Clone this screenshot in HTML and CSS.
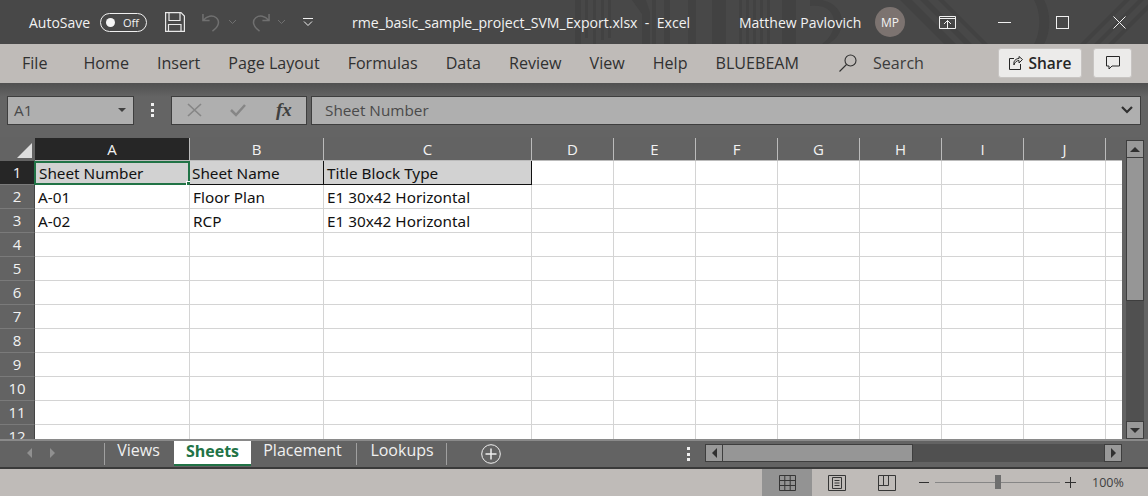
FILE: index.html
```html
<!DOCTYPE html>
<html lang="en">
<head>
    <meta charset="UTF-8">
    <title>rme_basic_sample_project_SVM_Export.xlsx - Excel</title>
    <link rel="stylesheet" href="styles.css">
</head>
<body>
<div class="app">
    <div class="titlebar">
        <svg class="title-art" width="588" height="44" viewBox="0 0 588 44" fill="#424242">
            <path d="M15 0h6v44h-6zM25 0h3v38h-3zM33 0h3v44h-3zM41 0h3v40h-3zM48 0h3v38h-3zM72 0h14l4 12V44H82V14zM92 0h4v44h-4zM104 0h6v44h-6zM128 0h8v44h-8zM152 0h14v44h-14zM179 0h3v44h-3zM186 0h3v44h-3zM193 0h3v44h-3zM200 0h3v44h-3zM207 0h3v44h-3zM222 0h14v44h-14zM250 0h12c14 3 20 12 20 22c0 10-6 18-14 22h-6c8-6 12-13 12-22c0-10-8-18-24-16z"/>
            <path d="M340 0h12l44 44h-12zM360 0h8l44 44h-8zM378 0h6l44 44h-6z"/>
            <path d="M474 0h10c7 12 7 32 0 44h-10c7-12 7-32 0-44z"/>
            <path d="M520 44l44-44h6l-44 44zM534 44l44-44h6l-44 44zM548 44l40-40v6l-34 34z"/>
        </svg>
        <span class="autosave">AutoSave</span>
        <span class="toggle"><i class="knob"></i><span class="toggle-text">Off</span></span>
        <svg class="ico-save" width="20" height="20" viewBox="0 0 20 20" fill="none" stroke="#e8e8e8" stroke-width="1.2"><path d="M.6.6H16L19.4 4V19.4H.6zM4 .6V8.5H15V.6M3.5 19.4V12.5H16V19.4"/></svg>
        <svg class="ico-undo" width="19" height="19" viewBox="0 0 20 20" fill="none" stroke="#707070" stroke-width="1.6"><path d="M1 1V8H8M1.5 7.5C5 3 11 2 15 5C19 8.500 18 14 11 19"/></svg>
        <svg class="ico-chev" width="7" height="4" viewBox="0 0 7 4" fill="none" stroke="#707070"><path d="M0 0L3.500 3.500L7 0"/></svg>
        <svg class="ico-redo" width="19" height="19" viewBox="0 0 20 20" fill="none" stroke="#707070" stroke-width="1.6"><path d="M19 1V8H12M18.500 7.500C15 3 9 2 5 5C1 8.500 2 14 9 19"/></svg>
        <svg class="ico-chev" width="7" height="4" viewBox="0 0 7 4" fill="none" stroke="#707070"><path d="M0 0L3.500 3.500L7 0"/></svg>
        <svg class="ico-qat" width="10" height="8" viewBox="0 0 10 8" fill="none" stroke="#f0f0f0"><path d="M0 .5H10M1 3.500L5 7.500L9 3.500"/></svg>
        <span class="doc-title">rme_basic_sample_project_SVM_Export.xlsx&nbsp; -&nbsp; Excel</span>
        <span class="user">Matthew Pavlovich</span>
        <span class="avatar">MP</span>
        <svg class="ico-display" width="17" height="13" viewBox="0 0 17 13" fill="none" stroke="#f0f0f0"><path d="M.5.5H16.500V12.500H.5zM.5 2.500H16.500M5 8L8.500 4.500L12 8M8.500 4.500V12"/></svg>
        <svg class="ico-min" width="13" height="1" viewBox="0 0 13 1"><rect width="13" height="1" fill="#f0f0f0"/></svg>
        <svg class="ico-max" width="13" height="13" viewBox="0 0 13 13" fill="none" stroke="#f0f0f0"><rect x=".5" y=".5" width="12" height="12"/></svg>
        <svg class="ico-close" width="13" height="13" viewBox="0 0 13 13" fill="none" stroke="#f0f0f0"><path d="M.5.5L12.500 12.500M12.500.5L.5 12.500"/></svg>
    </div>

    <div class="ribbon">
        <span class="rtab first">File</span>
        <span class="rtab">Home</span>
        <span class="rtab">Insert</span>
        <span class="rtab">Page Layout</span>
        <span class="rtab">Formulas</span>
        <span class="rtab">Data</span>
        <span class="rtab">Review</span>
        <span class="rtab">View</span>
        <span class="rtab">Help</span>
        <span class="rtab">BLUEBEAM</span>
        <svg class="ico-search" width="18" height="18" viewBox="0 0 18 18" fill="none" stroke="#303030" stroke-width="1.100"><circle cx="11.500" cy="6.500" r="5.500"/><path d="M7.500 10.500L.5 17.500"/></svg>
        <span class="search-text">Search</span>
        <button class="share">
            <svg width="14" height="14" viewBox="0 0 14 14" fill="none" stroke="#262626"><path d="M5 2.500H.5V13.500H11.500V8M5 9C5.500 6 8 4.500 10 4.500V7L13.500 3.500L10 .5V2.500C7 2.500 4 5 5 9z"/></svg>
            Share
        </button>
        <button class="comment">
            <svg width="14" height="14" viewBox="0 0 14 14" fill="none" stroke="#262626"><path d="M.5.5H13.500V10H6L3 13V10H.5z"/></svg>
        </button>
    </div>

    <div class="formulabar">
        <div class="namebox"><span>A1</span><i class="caret"></i></div>
        <div class="vdots"><i></i><i></i><i></i></div>
        <div class="fx-btns">
            <svg width="15" height="14" viewBox="0 0 15 14" fill="none" stroke="#868686" stroke-width="1.700"><path d="M1 1L14 13M14 1L1 13"/></svg>
            <svg width="16" height="14" viewBox="0 0 16 14" fill="none" stroke="#868686" stroke-width="2.500"><path d="M1 7L6 12L15 2"/></svg>
            <span class="fx">fx</span>
        </div>
        <div class="formula-input">
            <span>Sheet Number</span>
            <svg width="12" height="8" viewBox="0 0 12 8" fill="none" stroke="#303030" stroke-width="2.200"><path d="M1 1L6 6L11 1"/></svg>
        </div>
    </div>

    <div class="sheet-area">
        <div class="sheet-main">
            <div class="grid">
                <div class="corner"><i></i></div>
                <div class="ch active">A</div>
                <div class="ch">B</div>
                <div class="ch">C</div>
                <div class="ch">D</div>
                <div class="ch">E</div>
                <div class="ch">F</div>
                <div class="ch">G</div>
                <div class="ch">H</div>
                <div class="ch">I</div>
                <div class="ch">J</div>
                <div class="ch"></div>

                <div class="rh active">1</div>
                <div class="c head sel">Sheet Number<i class="handle"></i></div>
                <div class="c head">Sheet Name</div>
                <div class="c head">Title Block Type</div>
                <div class="c"></div><div class="c"></div><div class="c"></div><div class="c"></div><div class="c"></div><div class="c"></div><div class="c"></div><div class="c"></div>

                <div class="rh">2</div>
                <div class="c">A-01</div>
                <div class="c">Floor Plan</div>
                <div class="c">E1 30x42 Horizontal</div>
                <div class="c"></div><div class="c"></div><div class="c"></div><div class="c"></div><div class="c"></div><div class="c"></div><div class="c"></div><div class="c"></div>

                <div class="rh">3</div>
                <div class="c">A-02</div>
                <div class="c">RCP</div>
                <div class="c">E1 30x42 Horizontal</div>
                <div class="c"></div><div class="c"></div><div class="c"></div><div class="c"></div><div class="c"></div><div class="c"></div><div class="c"></div><div class="c"></div>

                <div class="rh">4</div><div class="c"></div><div class="c"></div><div class="c"></div><div class="c"></div><div class="c"></div><div class="c"></div><div class="c"></div><div class="c"></div><div class="c"></div><div class="c"></div><div class="c"></div>
                <div class="rh">5</div><div class="c"></div><div class="c"></div><div class="c"></div><div class="c"></div><div class="c"></div><div class="c"></div><div class="c"></div><div class="c"></div><div class="c"></div><div class="c"></div><div class="c"></div>
                <div class="rh">6</div><div class="c"></div><div class="c"></div><div class="c"></div><div class="c"></div><div class="c"></div><div class="c"></div><div class="c"></div><div class="c"></div><div class="c"></div><div class="c"></div><div class="c"></div>
                <div class="rh">7</div><div class="c"></div><div class="c"></div><div class="c"></div><div class="c"></div><div class="c"></div><div class="c"></div><div class="c"></div><div class="c"></div><div class="c"></div><div class="c"></div><div class="c"></div>
                <div class="rh">8</div><div class="c"></div><div class="c"></div><div class="c"></div><div class="c"></div><div class="c"></div><div class="c"></div><div class="c"></div><div class="c"></div><div class="c"></div><div class="c"></div><div class="c"></div>
                <div class="rh">9</div><div class="c"></div><div class="c"></div><div class="c"></div><div class="c"></div><div class="c"></div><div class="c"></div><div class="c"></div><div class="c"></div><div class="c"></div><div class="c"></div><div class="c"></div>
                <div class="rh">10</div><div class="c"></div><div class="c"></div><div class="c"></div><div class="c"></div><div class="c"></div><div class="c"></div><div class="c"></div><div class="c"></div><div class="c"></div><div class="c"></div><div class="c"></div>
                <div class="rh">11</div><div class="c"></div><div class="c"></div><div class="c"></div><div class="c"></div><div class="c"></div><div class="c"></div><div class="c"></div><div class="c"></div><div class="c"></div><div class="c"></div><div class="c"></div>
                <div class="rh">12</div><div class="c"></div><div class="c"></div><div class="c"></div><div class="c"></div><div class="c"></div><div class="c"></div><div class="c"></div><div class="c"></div><div class="c"></div><div class="c"></div><div class="c"></div>
            </div>
        </div>
        <div class="vscroll">
            <div class="sb-btn"><i class="tri up"></i></div>
            <div class="vthumb"></div>
            <div class="vtrack"></div>
            <div class="sb-btn"><i class="tri down"></i></div>
        </div>
    </div>

    <div class="tabbar">
        <div class="tab-nav"><i class="tri left dim"></i><i class="tri right dim"></i></div>
        <div class="sheet-tab views">Views</div>
        <div class="sheet-tab on">Sheets</div>
        <div class="sheet-tab placement">Placement</div>
        <div class="sheet-tab lookups">Lookups</div>
        <svg class="ico-plus" width="20" height="20" viewBox="0 0 20 20" fill="none" stroke="#f0f0f0"><circle cx="10" cy="10" r="9.300"/><path d="M10 4.500V15.500M4.500 10H15.500" stroke-width="1.500"/></svg>
        <div class="vdots tabdots"><i></i><i></i><i></i></div>
        <div class="hscroll">
            <div class="sb-btn"><i class="tri left"></i></div>
            <div class="hthumb"></div>
            <div class="htrack"></div>
            <div class="sb-btn"><i class="tri right"></i></div>
        </div>
    </div>

    <div class="statusbar">
        <div class="view-btn on">
            <svg width="17" height="16" viewBox="0 0 17 16" fill="none" stroke="#363636"><path d="M.5.5H16.500V15.500H.5zM.5 5.500H16.500M.5 10.500H16.500M5.800.5V15.500M11.200.5V15.500"/></svg>
        </div>
        <div class="view-btn">
            <svg width="18" height="16" viewBox="0 0 18 16" fill="none" stroke="#363636"><path d="M.5.5H17.500V15.500H.5zM4.500 2.500H13.500V13.500H4.500zM6.500 5.500H11.500M6.500 8H11.500M6.500 10.500H11.500"/></svg>
        </div>
        <div class="view-btn">
            <svg width="18" height="16" viewBox="0 0 18 16" fill="none" stroke="#363636"><path d="M.5.5H17.500V15.500H.5zM.5 10.500H10.500V.5M5.500.5V10.500"/></svg>
        </div>
        <span class="zoom-sign minus"></span>
        <div class="slider"><i></i></div>
        <span class="zoom-sign plus"></span>
        <span class="zoom-pct">100%</span>
    </div>
</div>
</body>
</html>
```

FILE: styles.css
```css
* {
    margin: 0;
    padding: 0;
    box-sizing: border-box;
}

body {
    width: 1148px;
    height: 496px;
    overflow: hidden;
    font-family: "Open Sans", "Noto Sans", sans-serif;
    background: #636363;
}

.app {
    display: flex;
    flex-direction: column;
    height: 496px;
}

/* title bar */
.titlebar {
    height: 44px;
    background: #484848;
    color: #f2f2f2;
    display: flex;
    align-items: center;
    font-size: 14px;
    padding-left: 29px;
    flex-shrink: 0;
    position: relative;
}

.titlebar > * {
    position: relative;
}

.titlebar > .title-art {
    position: absolute;
    left: 560px;
    top: 0;
}

.autosave {
    width: 71px;
}

.toggle {
    width: 47px;
    height: 19px;
    border: 1px solid #f0f0f0;
    border-radius: 10px;
    display: flex;
    align-items: center;
    padding-left: 5px;
    font-size: 11px;
}

.knob {
    width: 9px;
    height: 9px;
    border-radius: 50%;
    background: #f5f5f5;
    margin-right: 8px;
}

.ico-save { margin-left: 18px; }
.ico-undo { margin-left: 17px; }
.ico-chev { margin-left: 8px; }
.ico-redo { margin-left: 15px; }
.ico-qat { margin-left: 18px; }

.doc-title {
    margin-left: 39px;
    width: 387px;
    font-size: 14.100px;
    white-space: nowrap;
}

.user {
    width: 136px;
    white-space: nowrap;
}

.avatar {
    width: 30px;
    height: 30px;
    border-radius: 50%;
    background: #7c7370;
    font-size: 12px;
    display: flex;
    align-items: center;
    justify-content: center;
}

.ico-display { margin-left: 34px; }
.ico-min { margin-left: 42px; }
.ico-max { margin-left: 45px; }
.ico-close { margin-left: 44px; }

/* ribbon tabs */
.ribbon {
    height: 39px;
    background: #bfbbb8;
    color: #303030;
    display: flex;
    align-items: center;
    font-size: 16.100px;
    padding: 0 16px 1px 22px;
    gap: 28px;
    flex-shrink: 0;
}

.rtab.first {
    margin-right: 8px;
}

.ico-search {
    margin-left: 12px;
}

.search-text {
    margin-left: -12px;
    color: #3c3c3c;
}

.share {
    width: 84px;
    height: 30px;
    margin-left: auto;
    background: #ecebea;
    border: 1px solid #c8c5c3;
    border-radius: 3px;
    font: 600 15.500px "Open Sans", sans-serif;
    color: #262626;
    display: flex;
    align-items: center;
    justify-content: center;
    gap: 6px;
}

.comment {
    width: 39px;
    height: 30px;
    background: #ecebea;
    border: 1px solid #c8c5c3;
    border-radius: 3px;
    margin-left: -17px;
    display: flex;
    align-items: center;
    justify-content: center;
}

/* formula bar */
.formulabar {
    height: 54px;
    background: linear-gradient(#505050, #646464 14px);
    display: flex;
    align-items: center;
    padding: 0 7px;
    flex-shrink: 0;
}

.namebox,
.fx-btns,
.formula-input {
    height: 29px;
    background: #afafaf;
    border: 1px solid #3e3e3e;
    color: #4a4a4a;
    font-size: 15.300px;
    display: flex;
    align-items: center;
}

.namebox {
    width: 127px;
    padding: 0 7px 0 6px;
    justify-content: space-between;
}

.caret {
    border: 4px solid transparent;
    border-top-color: #404040;
    border-bottom: 0;
}

.vdots {
    width: 3px;
    height: 14px;
    display: flex;
    flex-direction: column;
    justify-content: space-between;
    margin: 0 17px;
}

.vdots i {
    height: 3px;
    background: #f0f0f0;
}

.fx-btns {
    width: 136px;
    margin-right: 4px;
    padding-left: 15px;
    gap: 28px;
}

.fx {
    font: italic bold 19px "Liberation Serif", serif;
    color: #404040;
    margin-left: 2px;
}

.formula-input {
    flex: 1;
    padding: 0 7px 0 13px;
    justify-content: space-between;
}

/* sheet */
.sheet-area {
    height: 302px;
    flex-shrink: 0;
    display: flex;
    overflow: hidden;
}

.sheet-main {
    width: 1122px;
    overflow: hidden;
}

.grid {
    display: grid;
    grid-template-columns: 35px 155px 134px 208px 82px 82px 82px 82px 82px 82px 82px 17px;
    grid-auto-rows: 24px;
    grid-template-rows: 24px;
}

.corner {
    background: #636363;
    display: flex;
    align-items: flex-end;
    justify-content: flex-end;
    padding: 0 3px 3px 0;
}

.corner i {
    border-left: 15px solid transparent;
    border-bottom: 15px solid #dedede;
}

.ch {
    background: #636363;
    color: #f2f2f2;
    font-size: 15px;
    line-height: 23px;
    text-align: center;
    border-right: 1px solid #bbb;
    border-bottom: 1px solid #bbb;
    margin-top: 1px;
}

.ch.active {
    background: #262626;
}

.rh {
    background: #636363;
    color: #f2f2f2;
    font-size: 15px;
    line-height: 23px;
    text-align: center;
    border-right: 1px solid #444;
    border-bottom: 1px solid #7a7a7a;
}

.rh.active {
    background: #262626;
}

.c {
    background: #fff;
    border-right: 1px solid #d4d4d4;
    border-bottom: 1px solid #d4d4d4;
    font-family: "Noto Sans", sans-serif;
    font-size: 15.300px;
    line-height: 25px;
    padding-left: 3px;
    color: #111;
    white-space: nowrap;
    position: relative;
}

.c.head {
    background: #d2d2d2;
    border-right: 1px solid #111;
    border-bottom: 1px solid #111;
    line-height: 25px;
    padding-left: 3px;
}

.c.head:nth-child(15) {
    padding-left: 2px;
}

.c.sel {
    border: 2px solid #217346;
    padding-left: 3px;
    line-height: 21px;
    margin-left: -1px;
}

.handle {
    position: absolute;
    right: -4px;
    bottom: -4px;
    width: 6px;
    height: 6px;
    background: #217346;
    border: 1px solid #fff;
}

/* scrollbars */
.vscroll {
    width: 26px;
    padding: 3px 4px 0;
    display: flex;
    flex-direction: column;
}

.sb-btn {
    width: 18px;
    height: 18px;
    flex-shrink: 0;
    background: #999;
    border: 1px solid #3e3e3e;
    display: flex;
    align-items: center;
    justify-content: center;
}

.vthumb {
    height: 143px;
    background: #969696;
    border: 1px solid #3e3e3e;
    border-top: 0;
    flex-shrink: 0;
}

.vtrack {
    flex: 1;
    background: #505050;
}

.tri {
    width: 0;
    height: 0;
    border: 5px solid transparent;
}

.tri.up { border-top: 0; border-bottom-color: #303030; }
.tri.down { border-bottom: 0; border-top-color: #303030; }
.tri.left { border-left: 0; border-right-color: #303030; }
.tri.right { border-right: 0; border-left-color: #303030; }
.tri.left.dim { border-right-color: #909090; }
.tri.right.dim { border-left-color: #909090; }

/* sheet tabs */
.tabbar {
    height: 30px;
    background: #636363;
    border-top: 2px solid #8a8a8a;
    border-bottom: 2px solid #3a3a3a;
    display: flex;
    align-items: flex-start;
    flex-shrink: 0;
}

.tab-nav {
    width: 104px;
    height: 26px;
    padding: 7px 0 0 27px;
    display: flex;
    gap: 18px;
}

.sheet-tab {
    height: 22px;
    margin-top: 2px;
    line-height: 15px;
    color: #f0f0f0;
    font-size: 16px;
    text-align: center;
}

.views {
    width: 70px;
    border-left: 1px solid #a0a0a0;
    padding-right: 2px;
}

.sheet-tab.on {
    width: 77px;
    height: 25px;
    margin-top: 0;
    line-height: 20px;
    background: #fff;
    border-bottom: 2px solid #217346;
    color: #217346;
    font-weight: 700;
}

.placement {
    width: 106px;
    border-right: 1px solid #a0a0a0;
    padding-right: 2px;
}

.lookups {
    width: 90px;
    border-right: 1px solid #a0a0a0;
    padding-left: 1px;
}

.ico-plus {
    margin: 3px 0 0 34px;
}

.tabdots {
    margin: 6px 15px 0 186px;
}

.hscroll {
    width: 417px;
    height: 18px;
    margin-top: 3px;
    display: flex;
}

.hthumb {
    width: 190px;
    background: #969696;
    border: 1px solid #3e3e3e;
    border-left: 0;
}

.htrack {
    flex: 1;
    background: #505050;
}

/* status bar */
.statusbar {
    flex: 1;
    background: #bfbbb8;
    display: flex;
    align-items: center;
    padding-left: 762px;
}

.view-btn {
    width: 50px;
    height: 27px;
    display: flex;
    align-items: center;
    justify-content: center;
}

.view-btn.on {
    background: #939393;
}

.zoom-sign {
    width: 10px;
    height: 1px;
    background: #303030;
    position: relative;
}

.zoom-sign.minus {
    margin-left: 7px;
}

.zoom-sign.plus {
    width: 11px;
}

.zoom-sign.plus::after {
    content: "";
    position: absolute;
    left: 5px;
    top: -5px;
    width: 1px;
    height: 11px;
    background: #303030;
}

.slider {
    width: 125px;
    height: 1px;
    background: #868686;
    margin: 0 5px 0 6px;
    position: relative;
}

.slider i {
    position: absolute;
    left: 60px;
    top: -7px;
    width: 6px;
    height: 14px;
    background: #6e6e6e;
}

.zoom-pct {
    margin-left: 16px;
    font-size: 12.500px;
    color: #404040;
}
```
